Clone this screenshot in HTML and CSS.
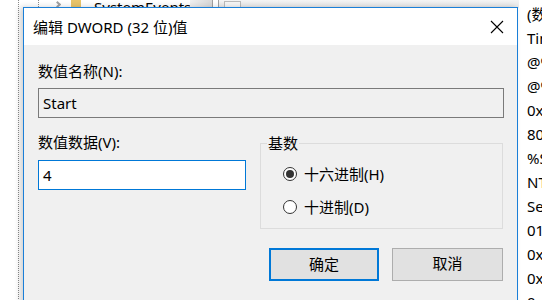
FILE: index.html
```html
<!DOCTYPE html>
<html lang="zh-CN">
<head>
<meta charset="utf-8">
<title>编辑 DWORD (32 位)值</title>
<link rel="stylesheet" href="styles.css">
</head>
<body>
<div class="desk">
  <div class="tree">
    <span class="dots d1"></span>
    <span class="dots d2"></span>
    <span class="arrow"></span>
    <span class="folder"></span>
    <span class="tree-text">SystemEvents</span>
    <span class="sel"></span>
    <span class="split s1"></span>
    <span class="split s2"></span>
    <span class="header"></span>
    <span class="file"></span>
  </div>

  <ul class="values">
    <li>(数</li>
    <li>Tin</li>
    <li>@%</li>
    <li>@%</li>
    <li>0x</li>
    <li>80</li>
    <li>%S</li>
    <li>NT</li>
    <li>Se</li>
    <li>01</li>
    <li>0x</li>
    <li>0x</li>
    <li>0x</li>
  </ul>

  <div class="dialog">
    <div class="titlebar">
      <span class="title">编辑 DWORD (32 位)值</span>
      <svg class="close" width="14" height="14" viewBox="0 0 14 14">
        <path d="M1 1 L13 13 M13 1 L1 13" stroke="#000" stroke-width="1.1" fill="none"/>
      </svg>
    </div>
    <div class="body">
      <div class="label l1">数值名称(N):</div>
      <div class="input name">Start</div>
      <div class="row">
        <div class="col">
          <div class="label">数值数据(V):</div>
          <div class="input data">4</div>
        </div>
        <fieldset class="group">
          <legend>基数</legend>
          <div class="radio r1"><span class="circle on"></span><span>十六进制(H)</span></div>
          <div class="radio r2"><span class="circle"></span><span>十进制(D)</span></div>
        </fieldset>
      </div>
      <div class="buttons">
        <div class="btn ok">确定</div>
        <div class="btn cancel">取消</div>
      </div>
    </div>
  </div>
</div>
</body>
</html>
```
FILE: styles.css
```css
* { box-sizing: border-box; }
html, body { margin: 0; padding: 0; background: #fff; }
body {
  font-family: "Noto Sans", "Noto Sans CJK SC", sans-serif;
  font-size: 15px;
  color: #000;
}
.desk {
  position: relative;
  width: 542px;
  height: 300px;
  overflow: hidden;
  background: #fff;
}

/* background registry tree strip */
.tree span { position: absolute; display: block; }
.dots { top: 0; width: 1px; height: 300px;
  background: repeating-linear-gradient(to bottom, #8a8a8a 0 1px, transparent 1px 2px); }
.d1 { left: 18px; }
.d2 { left: 38px; height: 8px; }
.arrow { left: 55px; top: 2px; width: 5px; height: 5px; border-right: 2px solid #a0a0a0; border-top: 2px solid #a0a0a0; transform: rotate(45deg); }
.folder { left: 71px; top: 0; width: 10px; height: 8px; background: #e8c46a; }
.tree-text { left: 94px; top: -3px; font-size: 15px; line-height: 20px; color: #000; }
.sel { left: 190px; top: 0; width: 22px; height: 8px; background: linear-gradient(to right, #f0f0f0, #d8d8d8); }
.split { top: 0; width: 1px; height: 8px; background: #a0a0a0; }
.s1 { left: 212px; }
.s2 { left: 218px; }
.header { left: 219px; top: 0; width: 300px; height: 8px; background: linear-gradient(to bottom, #f4f4f4, #e6e6e6); }
.file { left: 224px; top: 1px; width: 17px; height: 7px; border: 1px solid #bbb; background: #f6f6f6; }

/* right-side value list */
.values {
  position: absolute;
  left: 527px;
  top: 2px;
  margin: 0;
  padding: 0;
  list-style: none;
  line-height: 24px;
  font-size: 15px;
  white-space: nowrap;
}

/* dialog window */
.dialog {
  position: absolute;
  left: 23px;
  top: 7px;
  width: 495px;
  height: 320px;
  border: 1px solid #1a7fd8;
  background: #f0f0f0;
  box-shadow: -3px 0 6px rgba(0,0,0,0.18);
}
.titlebar {
  height: 37px;
  background: #fff;
  display: flex;
  align-items: center;
  padding: 0 13px 0 9px;
}
.title { line-height: 20px; margin-top: 1px; }
.close { margin-left: auto; margin-top: 1px; flex-shrink: 0; }

.body { padding: 0 13px 0 14px; }
.label { line-height: 20px; height: 20px; }
.l1 { margin-top: 16px; }
.input {
  height: 30px;
  line-height: 28px;
  padding-left: 4px;
  border: 1px solid #7a7a7a;
}
.name { margin-top: 7px; width: 466px; background: #f0f0f0; }
.row { display: flex; align-items: flex-start; margin-top: 14px; }
.col { width: 208px; flex-shrink: 0; }
.data { margin-top: 8px; background: #fff; border-color: #0078d7; }

.group {
  margin: 1px 0 0 14px;
  width: 243px;
  flex-shrink: 0;
  border: 1px solid #dcdcdc;
  padding: 0 0 11px 0;
}
.group legend {
  margin-left: 6px;
  padding: 0 1px;
  line-height: 20px;
}
.radio {
  display: flex;
  align-items: center;
  height: 20px;
  line-height: 20px;
  margin-left: 22px;
}
.r1 { margin-top: 11px; }
.r2 { margin-top: 13px; }
.circle {
  flex: 0 0 14px;
  width: 14px;
  height: 14px;
  border: 1px solid #333;
  border-radius: 50%;
  background: #fff;
  margin-right: 7px;
  display: flex;
  align-items: center;
  justify-content: center;
}
.circle.on::after {
  content: "";
  width: 8px;
  height: 8px;
  border-radius: 50%;
  background: #333;
}

.buttons {
  display: flex;
  justify-content: flex-end;
  gap: 13px;
  margin-top: 19px;
  margin-right: 1px;
}
.btn {
  height: 33px;
  line-height: 29px;
  text-align: center;
  background: #e1e1e1;
  border: 1px solid #adadad;
}
.ok { width: 110px; border: 2px solid #0078d7; }
.cancel { width: 111px; }
```
